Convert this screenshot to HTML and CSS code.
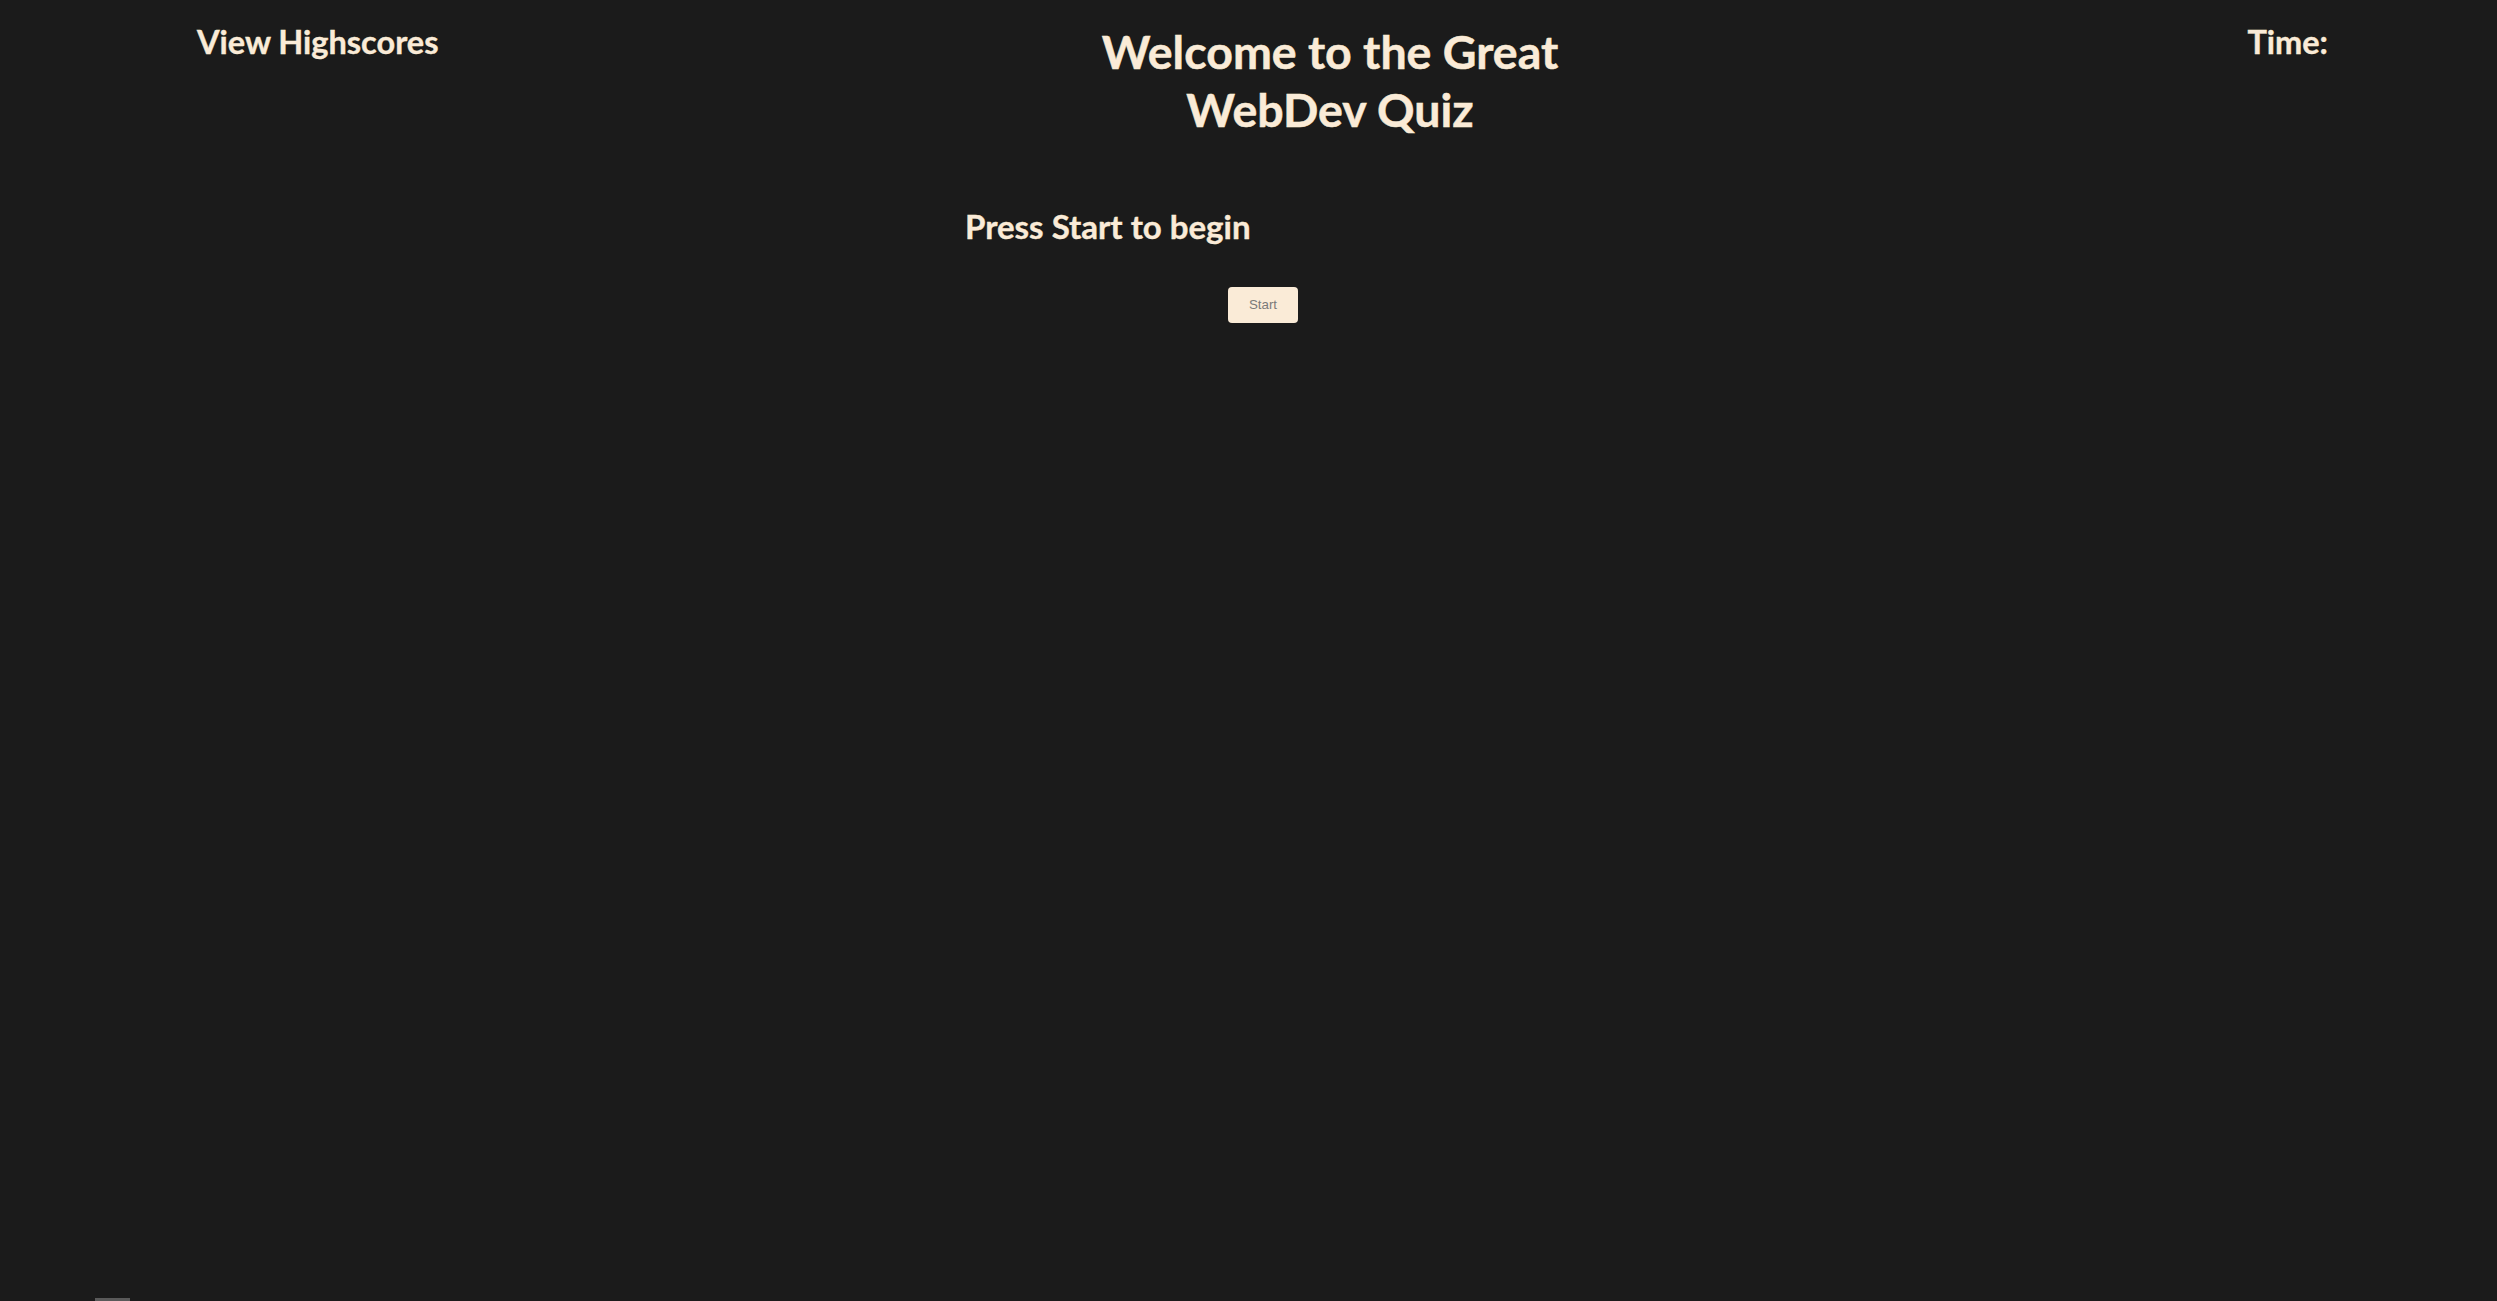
FILE: index.html
```html
<!DOCTYPE html>
<html lang="en">
<head>
<meta charset="utf-8">
<title>WebDev Quiz</title>
<link rel="stylesheet" href="styles.css">
</head>
<body>
<header class="top">
  <a class="highscores" href="#">View Highscores</a>
  <h1 class="title">Welcome to the Great WebDev Quiz</h1>
  <div class="timer">Time:</div>
</header>
<main class="quiz">
  <h2 class="prompt">Press Start to begin</h2>
  <div class="actions">
    <button class="start-btn" type="button">Start</button>
  </div>
</main>
<div class="scroll-thumb"></div>
</body>
</html>
```

FILE: styles.css
```css
html, body {
  margin: 0;
  padding: 0;
  height: 100%;
}
body {
  background: #1b1b1b;
  color: #faebd7;
  font-family: Lato, "Open Sans", sans-serif;
  overflow: hidden;
}
.top {
  display: grid;
  grid-template-columns: 883px 500px 1fr;
  align-items: start;
  padding: 22px 169px 0 197px;
}
.highscores {
  color: #faebd7;
  text-decoration: none;
  font-weight: 700;
  font-size: 32.5px;
  line-height: 1.2;
  -webkit-text-stroke: 0.4px #faebd7;
}
.title {
  margin: 0;
  text-align: center;
  font-weight: 700;
  font-size: 46.5px;
  line-height: 58px;
  -webkit-text-stroke: 0.5px #faebd7;
}
.timer {
  justify-self: end;
  font-weight: 700;
  font-size: 32.5px;
  line-height: 1.2;
  -webkit-text-stroke: 0.4px #faebd7;
}
.quiz {
  width: 596px;
  margin-left: 965px;
  padding-top: 69px;
}
.prompt {
  margin: 0;
  font-weight: 700;
  font-size: 33px;
  line-height: 1.2;
  -webkit-text-stroke: 0.4px #faebd7;
}
.actions {
  display: flex;
  justify-content: center;
  padding-top: 40px;
}
.start-btn {
  background: #faebd7;
  color: #7a7a7a;
  border: none;
  border-radius: 4px;
  font-family: "Liberation Sans", Arial, sans-serif;
  font-size: 13.33px;
  line-height: 16px;
  padding: 10px 21px;
}
.scroll-thumb {
  position: fixed;
  left: 95px;
  bottom: 0;
  width: 35px;
  height: 3px;
  background: #5a5a5a;
}
```
